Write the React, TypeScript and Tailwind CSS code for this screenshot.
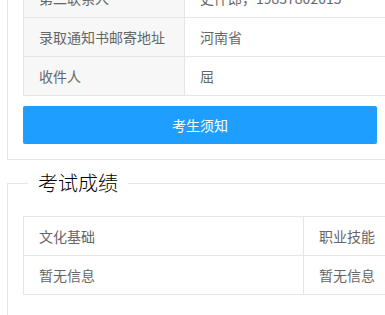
import React from "react";

const rows1 = [
  ["第二联系人", "史仟郎，19837802015"],
  ["录取通知书邮寄地址", "河南省"],
  ["收件人", "屈"],
];

export default function App() {
  return (
    <div className="w-[385px] h-[315px] overflow-hidden bg-white font-['Noto_Sans_CJK_SC','Noto_Sans',sans-serif]">
      <div className="w-[520px] pl-[7px] -mt-[40px]">
        <fieldset className="border border-[#e6e6e6] px-[15px] pt-[17px] pb-[15px]">
          <div className="w-[480px] border-l border-t border-[#e6e6e6]">
            {rows1.map(([k, v]) => (
              <div key={k} className="flex h-[39px] border-b border-[#e6e6e6]">
                <div className="w-[161px] shrink-0 border-r border-[#e6e6e6] bg-[#f7f7f7] pl-[15px] flex items-center text-[14px] text-[#666]">
                  {k}
                </div>
                <div className="flex-1 pl-[15px] flex items-center text-[14px] text-[#666]">{v}</div>
              </div>
            ))}
          </div>
          <button className="mt-[10px] h-[38px] w-[354px] rounded-[2px] bg-[#1e9fff] text-white text-[14px] flex items-center justify-center">
            考生须知
          </button>
        </fieldset>
        <fieldset className="mt-[11px] border border-[#e6e6e6] px-[15px] pt-[21px] pb-[20px]">
          <legend className="ml-[5px] px-[10px] text-[20px] leading-[24px] font-light text-[#000]">考试成绩</legend>
          <div className="w-[480px] border-l border-t border-[#e6e6e6]">
            {[["文化基础", "职业技能"], ["暂无信息", "暂无信息"]].map(([a, b], i) => (
              <div key={i} className="flex h-[39px] border-b border-[#e6e6e6]">
                <div className="w-[280px] shrink-0 border-r border-[#e6e6e6] pl-[15px] flex items-center text-[14px] text-[#666]">
                  {a}
                </div>
                <div className="flex-1 pl-[15px] flex items-center text-[14px] text-[#666]">{b}</div>
              </div>
            ))}
          </div>
        </fieldset>
      </div>
    </div>
  );
}
